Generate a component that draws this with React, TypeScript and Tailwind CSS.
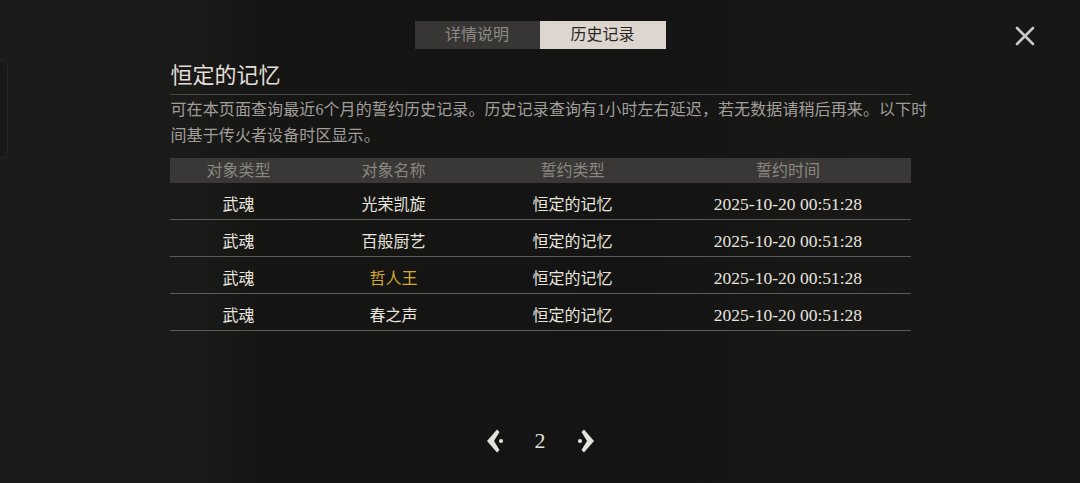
import React from "react";

const rows = [
  { type: "武魂", name: "光荣凯旋", oath: "恒定的记忆", time: "2025-10-20 00:51:28" },
  { type: "武魂", name: "百般厨艺", oath: "恒定的记忆", time: "2025-10-20 00:51:28" },
  { type: "武魂", name: "哲人王", oath: "恒定的记忆", time: "2025-10-20 00:51:28", gold: true },
  { type: "武魂", name: "春之声", oath: "恒定的记忆", time: "2025-10-20 00:51:28" },
];

const font = { fontFamily: '"Liberation Serif", "Noto Sans CJK SC", serif' };

const ArrowLeft = () => (
  <svg width="20" height="26" viewBox="0 0 20 26" fill="#e4e0da">
    <path d="M1 13 L11 1.5 L13.5 4 L8 13 L13.5 22 L11 24.5 Z" />
    <circle cx="15" cy="13" r="2.1" />
  </svg>
);

const ArrowRight = () => (
  <svg width="20" height="26" viewBox="0 0 20 26" fill="#e4e0da">
    <path d="M19 13 L9 1.5 L6.5 4 L12 13 L6.5 22 L9 24.5 Z" />
    <circle cx="5" cy="13" r="2.1" />
  </svg>
);

export default function App() {
  return (
    <div
      className="relative w-[1080px] h-[483px] overflow-hidden bg-[linear-gradient(90deg,#1b1b19_0%,#1a1a18_18%,#151514_24%,#141414_60%,#171716_75%,#161615_100%)]"
      style={font}
    >
      {/* left edge handle */}
      <div className="absolute left-[-12px] top-[60px] w-[20px] h-[98px] rounded-[6px] border border-[#262624] bg-[#191917]" />

      {/* close */}
      <button className="absolute left-[1013px] top-[24px] w-[24px] h-[24px] flex items-center justify-center">
        <svg width="22" height="22" viewBox="0 0 22 22" stroke="#cbc8c3" strokeWidth="2.6" strokeLinecap="round">
          <path d="M3 3 L19 19 M19 3 L3 19" />
        </svg>
      </button>

      <div className="mx-auto w-[741px] flex flex-col pt-[21px]">
        {/* tabs */}
        <div className="flex justify-center">
          <div className="w-[125px] h-[28px] bg-[#383634] text-[#8c8985] text-[16px] flex items-center justify-center">
            详情说明
          </div>
          <div className="w-[126px] h-[28px] bg-[#dcd6ce] text-[#2b2825] text-[16px] flex items-center justify-center">
            历史记录
          </div>
        </div>

        {/* title */}
        <div className="mt-[12px] pl-[1px] h-[30px] leading-[30px] text-[22px] text-[#e2ded8]">恒定的记忆</div>
        <div className="mt-[3px] h-px bg-[#4a4845]" />

        {/* description */}
        <div className="mt-[2px] pl-[1px] text-[16px] leading-[26px] tracking-[0.1px] text-[#a19e99] whitespace-nowrap">
          <div>可在本页面查询最近6个月的誓约历史记录。历史记录查询有1小时左右延迟，若无数据请稍后再来。以下时</div>
          <div>间基于传火者设备时区显示。</div>
        </div>

        {/* table */}
        <div className="mt-[9px] grid grid-cols-[138px_172px_186px_245px] h-[25px] bg-[#393836] text-[#8a8680] text-[16px] items-center text-center">
          <div>对象类型</div>
          <div>对象名称</div>
          <div>誓约类型</div>
          <div>誓约时间</div>
        </div>
        {rows.map((r, i) => (
          <div
            key={i}
            className="grid grid-cols-[138px_172px_186px_245px] h-[37px] pt-[7px] border-b border-[#5c5a56] text-[16px] items-center text-center text-[#e9e5df]"
          >
            <div>{r.type}</div>
            <div className={r.gold ? "text-[#d6aa2c]" : ""}>{r.name}</div>
            <div>{r.oath}</div>
            <div className="text-[17.5px]">{r.time}</div>
          </div>
        ))}

        {/* pagination */}
        <div className="mt-[97px] flex items-center justify-center gap-[29px] text-[#e4e0da]">
          <ArrowLeft />
          <span className="text-[22px] leading-none">2</span>
          <ArrowRight />
        </div>
      </div>
    </div>
  );
}
